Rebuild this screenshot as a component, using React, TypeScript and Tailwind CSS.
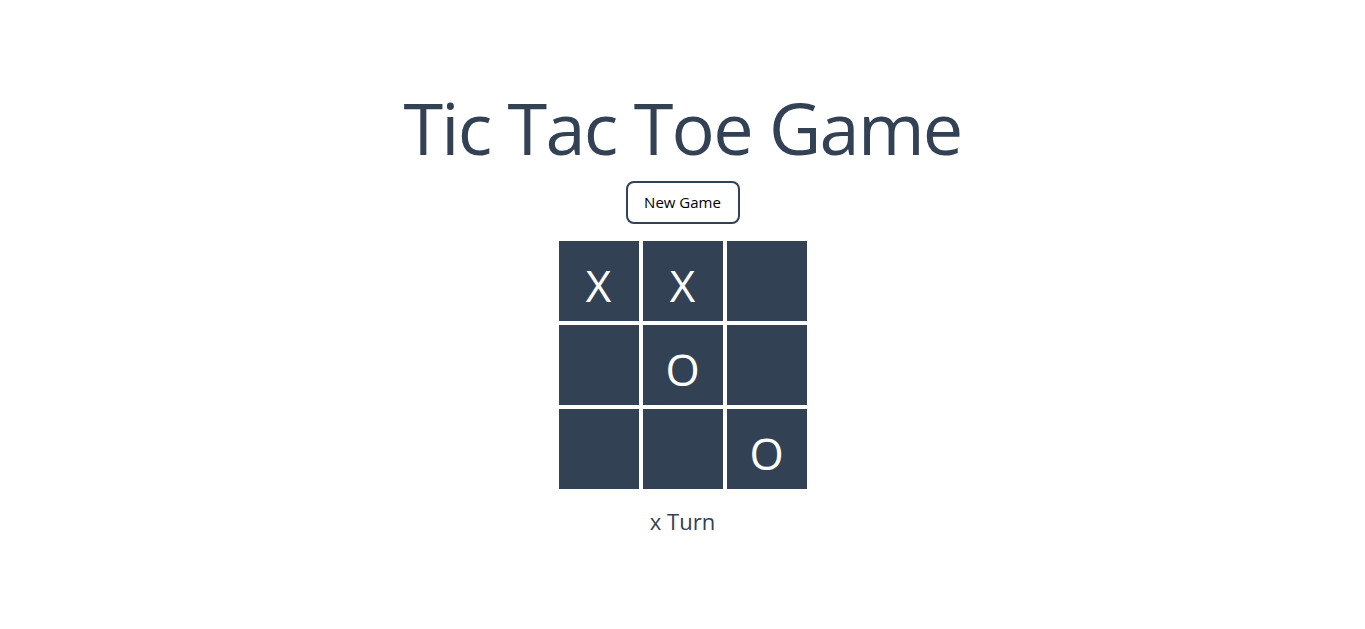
import React, { useState } from "react";

export default function App() {
  const [board, setBoard] = useState<string[]>(["X", "X", "", "", "O", "", "", "", "O"]);
  const [turn, setTurn] = useState("x");

  const play = (i: number) => {
    if (board[i]) return;
    const next = [...board];
    next[i] = turn.toUpperCase();
    setBoard(next);
    setTurn(turn === "x" ? "o" : "x");
  };

  return (
    <div className="min-h-screen bg-white flex flex-col items-center pt-[91px] text-[#334155] font-['Open_Sans',sans-serif]">
      <h1 className="text-[72px] leading-none font-normal tracking-[-1.7px]">Tic Tac Toe Game</h1>

      <button
        onClick={() => {
          setBoard(Array(9).fill(""));
          setTurn("x");
        }}
        className="mt-[18px] h-[43px] w-[114px] rounded-lg border-2 border-[#334155] bg-white text-[15px] text-black"
      >
        New Game
      </button>

      <div className="mt-[17px] grid grid-cols-[repeat(3,80px)] grid-rows-[repeat(3,80px)] gap-1">
        {board.map((cell, i) => (
          <button
            key={i}
            onClick={() => play(i)}
            className="bg-[#334155] text-white text-[44px] leading-none flex items-center justify-center pt-2"
          >
            {cell}
          </button>
        ))}
      </div>

      <p className="mt-[16px] text-[22px]">{turn} Turn</p>
    </div>
  );
}
